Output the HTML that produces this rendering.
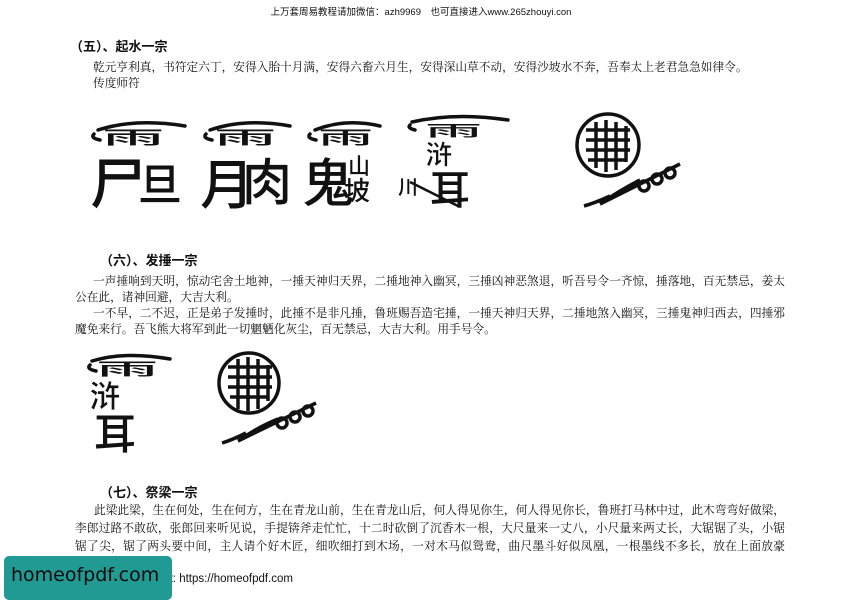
<!DOCTYPE html>
<html><head><meta charset="utf-8"><style>
html,body{margin:0;padding:0;background:#fff;}
body{width:842px;height:596px;position:relative;overflow:hidden;font-family:"Liberation Serif","Noto Serif CJK SC",serif;color:#111;}
.a{position:absolute;white-space:nowrap;}
.hdr{font-family:"Liberation Sans","Noto Sans CJK SC",sans-serif;font-size:9.5px;left:0;width:842px;text-align:center;top:4px;}
.h{font-family:"Liberation Sans","Noto Sans CJK SC",sans-serif;font-weight:bold;font-size:13px;}
.p{font-size:11.7px;line-height:16px;}
.t{font-family:"Noto Sans CJK SC",sans-serif;font-weight:500;fill:#111;}
</style></head><body>
<div class="a hdr">上万套周易教程请加微信：azh9969　也可直接进入www.265zhouyi.con</div>
<div class="a h" style="left:70px;top:36px;">（五）、起水一宗</div>
<div class="a p" style="left:93px;top:60px;">乾元亨利真，书符定六丁，安得入胎十月满，安得六畜六月生，安得深山草不动，安得沙坡水不奔，吾奉太上老君急急如律令。</div>
<div class="a p" style="left:93px;top:76px;">传度师符</div>

<svg class="a" style="left:80px;top:100px" width="620" height="120" viewBox="0 0 620 120">
<g stroke="#111" fill="none" stroke-width="3.5" stroke-linecap="round">
<path d="M18 30 Q55 18 105 26 M14 34 q-4 4 6 6"/>
<path d="M130 30 Q165 18 210 26 M126 34 q-4 4 6 6"/>
<path d="M235 30 Q265 18 300 26 M230 34 q-4 4 6 6"/>
<path d="M332 22 Q375 12 428 20 M330 25 q-3 3 5 5"/>
</g>
<text class="t" transform="translate(22,44) scale(2.6,0.75)" font-size="24">雨</text>
<text class="t" transform="translate(134,44) scale(2.6,0.75)" font-size="24">雨</text>
<text class="t" transform="translate(238,44) scale(2.3,0.75)" font-size="24">雨</text>
<text class="t" transform="translate(345,36) scale(2.6,0.7)" font-size="22">雨</text>
<text class="t" x="10" y="104" font-size="56" font-weight="300">尸</text>
<text class="t" x="58" y="100" font-size="44" font-weight="300">旦</text>
<text class="t" x="120" y="104" font-size="54" font-weight="300">月</text>
<text class="t" x="162" y="100" font-size="50" font-weight="300">肉</text>
<text class="t" x="222" y="102" font-size="52" font-weight="300">鬼</text>
<text class="t" x="268" y="74" font-size="22" font-weight="300">山</text>
<text class="t" x="264" y="100" font-size="26" font-weight="300">坡</text>
<text class="t" x="318" y="94" font-size="20" font-weight="300">川</text>
<text class="t" x="346" y="64" font-size="26" font-weight="300">浒</text>
<text class="t" x="350" y="104" font-size="40" font-weight="300">耳</text>
<path d="M330 82 L378 106" stroke="#111" stroke-width="2.5"/>
<g stroke="#111" fill="none" stroke-width="3.5">
<circle cx="528" cy="45" r="31"/>
<path d="M506 30 H550 M506 40 H550 M506 50 H550 M508 60 H546 M516 22 V68 M526 20 V72 M536 22 V70 M546 26 V62"/>
<path d="M520 104 L600 64 M520 104 Q540 90 560 80 M504 106 Q515 103 530 96"/>
<circle cx="564" cy="86" r="5"/><circle cx="577" cy="79" r="5"/><circle cx="590" cy="73" r="5"/>
</g>
</svg>

<div class="a h" style="left:100px;top:250px;">（六）、发捶一宗</div>
<div class="a p" style="left:75px;top:274px;width:710px;white-space:normal;text-indent:18px;text-align:justify;">一声捶响到天明，惊动宅舍土地神，一捶天神归天界，二捶地神入幽冥，三捶凶神恶煞退，听吾号令一齐惊，捶落地，百无禁忌，姜太公在此，诸神回避，大吉大利。</div>
<div class="a p" style="left:75px;top:306px;width:710px;white-space:normal;text-indent:18px;text-align:justify;">一不早，二不迟，正是弟子发捶时，此捶不是非凡捶，鲁班赐吾造宅捶，一捶天神归天界，二捶地煞入幽冥，三捶鬼神归西去，四捶邪魔免来行。吾飞熊大将军到此一切魍魉化灰尘，百无禁忌，大吉大利。用手号令。</div>

<svg class="a" style="left:80px;top:345px" width="260" height="110" viewBox="0 0 260 110">
<g stroke="#111" fill="none" stroke-width="3.5" stroke-linecap="round">
<path d="M12 16 Q45 6 90 14 M10 20 q-4 4 6 6"/>
</g>
<text class="t" transform="translate(16,30) scale(2.6,0.7)" font-size="24">雨</text>
<text class="t" x="10" y="62" font-size="30" font-weight="300">浒</text>
<text class="t" x="14" y="104" font-size="42" font-weight="300">耳</text>
<g stroke="#111" fill="none" stroke-width="3.5">
<circle cx="169" cy="38" r="30"/>
<path d="M148 22 H192 M148 32 H192 M148 42 H192 M150 52 H188 M158 14 V64 M168 12 V66 M178 14 V64 M188 20 V56"/>
<path d="M158 96 L236 58 M158 96 Q178 82 198 74 M142 98 Q152 95 166 88"/>
<circle cx="202" cy="78" r="5"/><circle cx="215" cy="72" r="5"/><circle cx="228" cy="66" r="5"/>
</g>
</svg>

<div class="a h" style="left:100px;top:482px;">（七）、祭梁一宗</div>
<div class="a p" style="left:75px;top:502px;width:710px;white-space:normal;text-indent:19px;text-align:justify;line-height:18px;">此梁此梁，生在何处，生在何方，生在青龙山前，生在青龙山后，何人得见你生，何人得见你长，鲁班打马林中过，此木弯弯好做梁，李郎过路不敢砍，张郎回来听见说，手提锛斧走忙忙，十二时砍倒了沉香木一根，大尺量来一丈八，小尺量来两丈长，大锯锯了头，小锯锯了尖，锯了两头要中间，主人请个好木匠，细吹细打到木场，一对木马似鸳鸯，曲尺墨斗好似凤凰，一根墨线不多长，放在上面放豪光，</div>

<div class="a" style="left:153px;top:573px;font-family:'Liberation Sans',sans-serif;font-size:11.5px;">visit: https://homeofpdf.com</div>
<div class="a" style="left:4px;top:556px;width:168px;height:44px;background:#229a94;border-radius:5px;"></div>
<div class="a" style="left:11px;top:564px;font-family:'DejaVu Sans',sans-serif;font-size:19px;color:#0a0a0a;">homeofpdf.com</div>
</body></html>
